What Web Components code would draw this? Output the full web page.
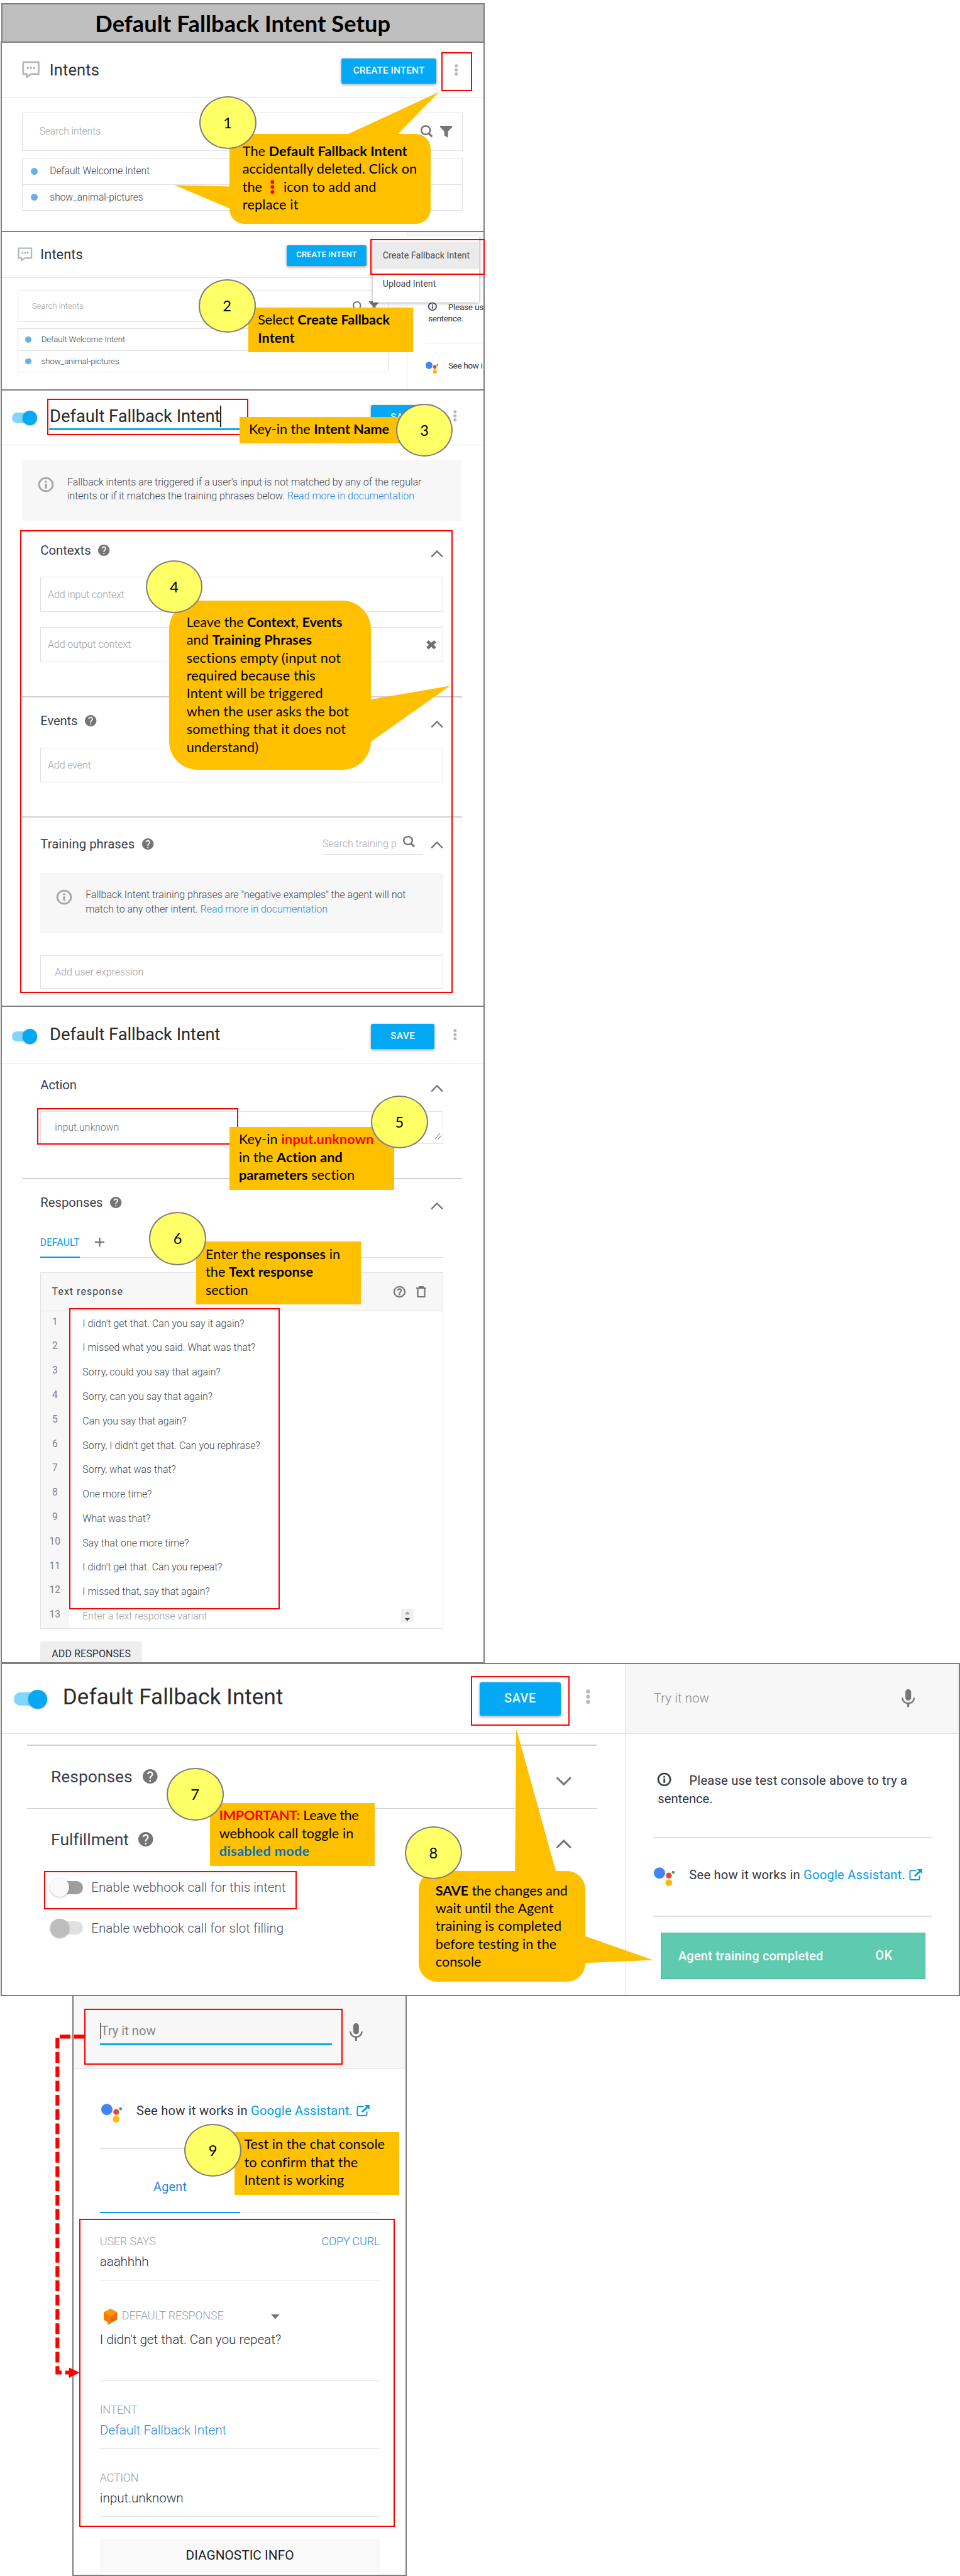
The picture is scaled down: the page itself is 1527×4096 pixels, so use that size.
<!DOCTYPE html>
<html lang="en">
<head>
<meta charset="utf-8">
<title>Default Fallback Intent Setup</title>
<style>
html{overflow:hidden;background:#fff}
body{margin:0;overflow:hidden}
</style>
</head>
<body>
<intent-guide></intent-guide>
<script>
const ICONS = {
  chat: ['0 0 30 29', '<path d="M2 2h26v20H15l-7 5v-5H2z" fill="none" stroke="#b4b8c4" stroke-width="3" stroke-linejoin="round"/><path d="M8 9.500h3.500v4H8zM13.300 9.500h3.500v4h-3.500zM18.600 9.500h3.500v4h-3.500z" fill="#b4b8c4"/>'],
  dots: ['0 0 6 20', '<circle cx="3" cy="3" r="2.700"/><circle cx="3" cy="10" r="2.700"/><circle cx="3" cy="17" r="2.700"/>'],
  search: ['0 0 20 21', '<circle cx="8.500" cy="8.500" r="7.200" fill="none" stroke="#757575" stroke-width="2.600"/><path d="M13.500 14l5.500 5.500" stroke="#757575" stroke-width="3.400"/>'],
  filter: ['0 0 20 20', '<path d="M0 0h20v2l-7 7.500V20l-6-4V9.500L0 2z" fill="#757575"/>'],
  help: ['2 2 20 20', '<path fill="#757575" d="M12 2C6.480 2 2 6.480 2 12s4.480 10 10 10 10-4.480 10-10S17.520 2 12 2zm1 17h-2v-2h2v2zm2.070-7.750l-.9.920C13.450 12.900 13 13.500 13 15h-2v-.5c0-1.100.450-2.100 1.170-2.830l1.240-1.260c.370-.360.590-.860.590-1.410 0-1.100-.9-2-2-2s-2 .9-2 2H8c0-2.210 1.790-4 4-4s4 1.790 4 4c0 .880-.360 1.680-.930 2.250z"/>'],
  helpo: ['2 2 20 20', '<path fill="#757575" stroke="#757575" stroke-width=".5" d="M11 18h2v-2h-2v2zm1-16C6.480 2 2 6.480 2 12s4.480 10 10 10 10-4.480 10-10S17.520 2 12 2zm0 18c-4.410 0-8-3.590-8-8s3.590-8 8-8 8 3.590 8 8-3.590 8-8 8zm0-14c-2.210 0-4 1.790-4 4h2c0-1.100.9-2 2-2s2 .9 2 2c0 2-3 1.750-3 5h2c0-2.250 3-2.500 3-5 0-2.210-1.790-4-4-4z"/>'],
  info: ['2 2 20 20', '<path fill="currentColor" stroke="currentColor" stroke-width=".5" d="M11 17h2v-6h-2v6zm1-15C6.480 2 2 6.480 2 12s4.480 10 10 10 10-4.480 10-10S17.520 2 12 2zm0 18c-4.410 0-8-3.590-8-8s3.590-8 8-8 8 3.590 8 8-3.590 8-8 8zM11 9h2V7h-2v2z"/>'],
  up: ['0 0 21 12', '<path d="M1.300 11L10.500 1.600 19.700 11" fill="none" stroke="#757575" stroke-width="2.500"/>'],
  down: ['0 0 21 12', '<path d="M1.300 1L10.500 10.400 19.700 1" fill="none" stroke="#757575" stroke-width="2.500"/>'],
  close: ['0 0 17 16', '<path d="M2 2l13 12M15 2L2 14" stroke="#6f6f6f" stroke-width="5.200"/>'],
  plus: ['0 0 16 15', '<path d="M8 0v15M0 7.500h16" stroke="#757575" stroke-width="2.400"/>'],
  trash: ['0 0 17 20', '<path d="M0 3.500h17M5.500 3V1.200h6V3M2.700 3.500v15h11.600v-15" fill="none" stroke="#757575" stroke-width="2.300"/>'],
  grip: ['0 0 10 10', '<path d="M0 10L8 0M5 10l5-6" stroke="#777" stroke-width="1.100"/>'],
  mic: ['5 2 14 19', '<path fill="#757575" d="M12 14c1.660 0 3-1.340 3-3V5c0-1.660-1.340-3-3-3S9 3.340 9 5v6c0 1.660 1.340 3 3 3zm5.300-3c0 3-2.540 5.100-5.300 5.100S6.700 14 6.700 11H5c0 3.410 2.720 6.230 6 6.720V21h2v-3.280c3.280-.480 6-3.300 6-6.720h-1.700z"/>'],
  assistant: ['0 0 35 32', '<circle cx="9.500" cy="9.700" r="9.500" fill="#4285f4"/><circle cx="25.200" cy="14" r="4.900" fill="#ea4335"/><circle cx="32.500" cy="8.700" r="2.500" fill="#34a853"/><circle cx="25.200" cy="26" r="5.700" fill="#fbbc05"/>'],
  ext: ['0 0 22 19', '<path d="M12 2.500H4Q1.500 2.500 1.500 5v10.500Q1.500 18 4 18h11q2.500 0 2.500-2.500V11" fill="none" stroke="#039be5" stroke-width="2"/><path d="M13 0h9v8l-3-2.600-8.500 7.400-2.300-2 8.500-7.600z" fill="#039be5"/>'],
  cube: ['0 0 22 27', '<path d="M11 0l11 6v12.500L6.500 27v-4.500L0 18.500V6z" fill="#ef6c00"/><path d="M11 0l11 6-11 6.500L0 6z" fill="#ff9800"/><path d="M0 6l11 6.500v12L6.500 27v-4.500L0 18.500z" fill="#f57c00"/>'],
  caret: ['0 0 14 8', '<path d="M0 0h14L7 8z" fill="#757575"/>'],
  spin: ['0 0 21 24', '<path d="M0 0h21v24H0z" fill="#efefef"/><path d="M6 9.500h9L10.500 4.500z" fill="#9c9c9c"/><path d="M6 15.500h9l-4.500 5z" fill="#444"/>']
};

class AppIcon extends HTMLElement {
  connectedCallback() {
    if (this.shadowRoot) return;
    const [box, art] = ICONS[this.getAttribute('name')];
    const w = this.getAttribute('w'), h = this.getAttribute('h');
    this.attachShadow({mode: 'open'}).innerHTML =
      `<style>:host{display:block;flex:none;width:${w}px;height:${h}px;fill:#b4b8c4}svg{display:block;width:100%;height:100%;overflow:visible}</style>
       <svg viewBox="${box}" preserveAspectRatio="none">${art}</svg>`;
  }
}

/* One line of text, tracked so that it fills the given width. */
class UiText extends HTMLElement {
  connectedCallback() {
    if (this.shadowRoot) return;
    const w = +this.getAttribute('w');
    const s = this.getAttribute('s');
    this.attachShadow({mode: 'open'}).innerHTML =
      `<style>:host{display:block;flex:none;width:${w}px;white-space:nowrap;${s ? `font-size:${s}px` : ''}}
       </style><span><slot></slot></span>`;
    const span = this.shadowRoot.querySelector('span');
    const host = this.getBoundingClientRect().width;
    if (!host) return;
    const natural = w * span.getBoundingClientRect().width / host;
    const n = this.textContent.length;
    span.style.letterSpacing = ((w - natural) / n).toFixed(4) + 'px';
  }
}

class StepPanel extends HTMLElement {
  connectedCallback() {
    if (this.shadowRoot) return;
    this.attachShadow({mode: 'open'}).innerHTML =
      `<style>:host{display:flex;position:relative;box-sizing:border-box;width:${this.getAttribute('w') || 815}px;height:${this.getAttribute('h')}px;flex:none}
       :host::after{content:"";position:absolute;inset:-1px 0 -1px 1px;border:2.200px solid #7f7f7f;pointer-events:none}
       div{flex:1;min-width:0;display:flex;overflow:hidden}::slotted(*){flex:none}</style><div><slot></slot></div>`;
  }
}

class UiButton extends HTMLElement {
  connectedCallback() {
    if (this.shadowRoot) return;
    const a = n => this.getAttribute(n);
    this.attachShadow({mode: 'open'}).innerHTML =
      `<style>:host{display:flex;flex:none;align-items:center;justify-content:center;width:${a('w')}px;height:${a('h')}px;background:#03a9f4;color:#fff;font-weight:500;border-radius:3px;box-shadow:0 2px 5px rgba(0,0,0,.35)}ui-text{margin-top:-3px}</style>
       <ui-text w="${a('tw')}" s="${a('s')}">${a('label')}</ui-text>`;
  }
}

class ToggleSwitch extends HTMLElement {
  connectedCallback() {
    if (this.shadowRoot) return;
    const a = n => this.getAttribute(n);
    const kinds = {on: ['#81d4fa', '#03a9f4', 'flex-end'], off: ['#9e9e9e', '#fafafa', 'flex-start'], disabled: ['#e0e0e0', '#bdbdbd', 'flex-start']};
    const [track, thumb, side] = kinds[a('state')];
    this.attachShadow({mode: 'open'}).innerHTML =
      `<style>:host{display:grid;flex:none;width:${a('w')}px;height:${a('t')}px;align-items:center}
       i,b{grid-area:1/1}i{height:70%;width:90%;border-radius:20px;background:${track};justify-self:${side === 'flex-end' ? 'start' : 'end'}}
       b{width:${a('t')}px;height:${a('t')}px;border-radius:50%;background:${thumb};justify-self:${side};box-shadow:0 1px 3px rgba(0,0,0,.3)}</style><i></i><b></b>`;
  }
}

/* Bordered box for inputs */
class FieldBox extends HTMLElement {
  connectedCallback() {
    if (this.shadowRoot) return;
    const a = n => this.getAttribute(n);
    this.attachShadow({mode: 'open'}).innerHTML =
      `<style>:host{display:flex;align-items:center;box-sizing:border-box;border:1.500px solid #e0e0e0;width:${a('w')}px;height:${a('h')}px;font-weight:300;color:#a0a0a4;font-size:17px}</style><slot></slot>`;
  }
}

class SectionHead extends HTMLElement {
  connectedCallback() {
    if (this.shadowRoot) return;
    const a = n => this.getAttribute(n);
    const big = this.hasAttribute('big');
    this.attachShadow({mode: 'open'}).innerHTML =
      `<style>:host{display:flex;align-items:center;box-sizing:border-box;height:${big ? 52 : 41}px;padding:0 ${big ? '88.600px 0 85.800px' : '69px 0 68px'};color:#3b3f4a;font-size:${big ? 28 : 21.500}px}
       .help{margin-left:${big ? 17 : 12.500}px}.chev{margin:${a('drop') || 12}px 0 0 13px}.grow{flex:1;display:flex;justify-content:flex-end}</style>
       <ui-text w="${a('w')}">${a('label')}</ui-text>
       ${this.hasAttribute('nohelp') ? '' : `<app-icon class="help" name="help" w="${big ? 25 : 19.500}" h="${big ? 24.500 : 19}"></app-icon>`}
       <span class="grow"><slot></slot></span>
       <app-icon class="chev" name="${a('chev') || 'up'}" w="${big ? 27 : 21.400}" h="${big ? 15 : 12}"></app-icon>`;
  }
}

class InfoBanner extends HTMLElement {
  connectedCallback() {
    if (this.shadowRoot) return;
    this.attachShadow({mode: 'open'}).innerHTML =
      `<style>:host{display:flex;box-sizing:border-box;height:102.400px;width:${this.getAttribute('w')}px;background:#f7f7f7;padding:26px 0 0 27.500px;gap:23.500px;font-weight:300;font-size:17px;line-height:24px;color:#3f434d}
       app-icon{color:#a3a5aa;margin-top:3px}</style>
       <app-icon name="info" w="25.500" h="24.500"></app-icon><div><slot></slot></div>`;
  }
}

class ResponseTable extends HTMLElement {
  connectedCallback() {
    if (this.shadowRoot) return;
    const rows = [["I didn't get that. Can you say it again?", 272], ["I missed what you said. What was that?", 290.8], ["Sorry, could you say that again?", 232], ["Sorry, can you say that again?", 218.6], ["Can you say that again?", 175], ["Sorry, I didn't get that. Can you rephrase?", 298.6], ["Sorry, what was that?", 157], ["One more time?", 116.6], ["What was that?", 114], ["Say that one more time?", 179], ["I didn't get that. Can you repeat?", 235], ["I missed that, say that again?", 214], ["Enter a text response variant", 209.7]];
    this.attachShadow({mode: 'open'}).innerHTML =
      `<style>:host{display:flex;flex-direction:column;box-sizing:border-box;width:678.500px;height:600px;border:1.500px solid #e3e3e3}
       header{display:flex;align-items:center;height:63px;background:#f7f7f7;border-bottom:1.500px solid #e3e3e3;padding:0 28px 0 19px;color:#3b3f4a}
       header ui-text{margin-right:auto}header app-icon{margin-left:18px}
       .r{display:flex;align-items:center;height:41.030px;font-weight:300;font-size:16.800px;color:#3c3f48}
       .n{width:48px;height:100%;display:flex;justify-content:center;background:#f7f7f7;font-weight:400;font-size:16.500px;line-height:37.500px;color:#808289;margin-right:22.600px;flex:none}
       .last{color:#9b9b9b}.last app-icon{margin-left:auto;margin-right:49px}</style>
       <header><ui-text w="120" s="17">Text response</ui-text><app-icon name="helpo" w="20" h="19"></app-icon><app-icon name="trash" w="17" h="19.500"></app-icon></header>
       ${rows.map(([t, w], i) => `<div class="r${i === 12 ? ' last' : ''}"><span class="n">${i + 1}</span><ui-text w="${w}">${t}</ui-text>${i === 12 ? '<app-icon name="spin" w="21" h="24"></app-icon>' : ''}</div>`).join('')}`;
  }
}

/* Annotations that lie over the panels */
class RedFrame extends HTMLElement {
  connectedCallback() {
    if (this.shadowRoot) return;
    const [x, y, x2, y2] = this.getAttribute('box').split(' ').map(Number);
    this.attachShadow({mode: 'open'}).innerHTML =
      `<style>:host{display:block;position:absolute;box-sizing:border-box;left:${x}px;top:${y}px;width:${x2 - x}px;height:${y2 - y}px;border:2.200px solid #f00}</style>`;
  }
}
class StepBadge extends HTMLElement {
  connectedCallback() {
    if (this.shadowRoot) return;
    const [x, y] = this.getAttribute('at').split(' ').map(Number);
    this.attachShadow({mode: 'open'}).innerHTML =
      `<style>:host{display:flex;align-items:center;justify-content:center;position:absolute;box-sizing:border-box;left:${x}px;top:${y}px;width:96px;height:89px;border:2.200px solid #7f7f7f;border-radius:50%;background:#ff6;font:25px Lato,sans-serif;color:#000}</style><slot></slot>`;
  }
}
class NoteCallout extends HTMLElement {
  connectedCallback() {
    if (this.shadowRoot) return;
    const [x, y, x2, y2] = this.getAttribute('box').split(' ').map(Number);
    const tails = (this.getAttribute('tails') || '').split(';').filter(Boolean)
      .map(t => `<polygon points="${t.trim().split(' ').map(p => { const [a, b] = p.split(','); return (a - x) + ',' + (b - y); }).join(' ')}"/>`).join('');
    this.attachShadow({mode: 'open'}).innerHTML =
      `<style>:host{display:block;position:absolute;box-sizing:border-box;left:${x}px;top:${y}px;width:${x2 - x}px;height:${y2 - y}px;background:#ffc000;border-radius:${this.getAttribute('r') || 0}px;padding:${this.getAttribute('pad') || '6px 0 0 15.800px'};font:22.900px/30px Lato,sans-serif;color:#000}
       svg{position:absolute;left:0;top:0;width:1px;height:1px;overflow:visible;fill:#ffc000}
       section{position:relative}</style><svg>${tails}</svg><section><slot></slot></section>`;
  }
}

class IntentGuide extends HTMLElement {
  connectedCallback() {
    if (this.shadowRoot) return;
    this.attachShadow({mode: 'open'}).innerHTML = `
<style>
:host{display:block;position:relative;width:1615px;height:4332px;zoom:.9455;font-family:Roboto,"Liberation Sans",sans-serif;font-size:17px;color:#2f333d;background:#fff;overflow:hidden}
main{display:flex;flex-direction:column;padding-top:5px}
.title{box-sizing:border-box;width:813px;height:66px;margin-left:2px;border:2.200px solid #7f7f7f;border-bottom:0;background:#bfbfbf;display:flex;align-items:center;justify-content:center;font:700 38.300px Lato,sans-serif;color:#000}
.col{display:flex;flex-direction:column;flex:none}
.col>*{flex:none}
.row{display:flex;align-items:center;box-sizing:border-box}
.head{border-bottom:1.500px solid #e3e3e3}
.auto{margin-left:auto}
.light{font-weight:300}
a{color:#1e88e5}
hr{margin:0;border:0;height:1.600px;background:#d2cecd}
hr.soft{background:#e2e2e2}
.dot{width:11.600px;height:11.600px;border-radius:50%;background:#64b1ea;flex:none}
.list{border:1.500px solid #e0e0e0;box-sizing:border-box;font-weight:300;color:#3a3e48}
.list .row+.row{border-top:1.500px solid #e0e0e0}
.side{border-left:1.500px solid #e3e3e3;box-sizing:border-box}
.grey{background:#f7f7f7}
.name{display:flex;align-items:center;box-sizing:border-box;width:495.500px;padding-left:.7px;color:#2a2a2a}
.caret{width:1.600px;background:#222;flex:none}
.menu{position:absolute;left:627.600px;top:398px;width:178.400px;height:111px;box-sizing:border-box;padding-top:7.700px;background:#fff;box-shadow:0 2px 5px rgba(0,0,0,.35);color:#4a4a4a;font-size:15px}
.menu div{display:flex;align-items:center;height:47.300px;padding-left:16.200px}
.menu div:first-child{background:#ebebeb}
.label{color:#9a9ea8;font-weight:300;font-size:19px;height:30px;line-height:30px;display:flex;align-items:center;justify-content:space-between}
.value{font-weight:300;font-size:22px;height:40px;line-height:40px;color:#2c303a}
.over{position:absolute;inset:0}
.over svg{position:absolute;left:0;top:0;width:1615px;height:4332px}
.red{color:#f00}.blue{color:#0070c0}
</style>
<main>
<div class="title"><ui-text w="497">Default Fallback Intent Setup</ui-text></div>

<step-panel h="318"><div class="col" style="width:815px">
  <div class="row head" style="height:93.500px;padding:0 44px 0 36.600px">
    <app-icon name="chat" w="30" h="29"></app-icon><ui-text w="84" s="27" style="margin-left:16.600px">Intents</ui-text>
    <ui-button class="auto" style="margin-top:5px" w="160" h="43" tw="120" s="16.300" label="CREATE INTENT"></ui-button>
    <app-icon name="dots" w="6" h="19.500" style="margin-left:31px"></app-icon>
  </div>
  <field-box w="741.300" h="64" style="margin:25px 0 0 37.200px"><ui-text w="103" s="16.500" style="margin-left:28px">Search intents</ui-text>
    <app-icon class="auto" name="search" w="20.500" h="21"></app-icon><app-icon name="filter" w="20.500" h="20" style="margin:0 17px 0 12px"></app-icon></field-box>
  <div class="list" style="width:741.300px;margin:12.400px 0 0 37.200px">
    <div class="row" style="height:42.500px;padding-left:14px;gap:20px"><i class="dot"></i><ui-text w="168" s="16.500">Default Welcome Intent</ui-text></div>
    <div class="row" style="height:43.500px;padding-left:14px;gap:20px"><i class="dot"></i><ui-text w="157" s="16.500">show_animal-pictures</ui-text></div>
  </div>
</div></step-panel>

<step-panel h="267"><div class="col" style="width:684px">
  <div class="row head" style="height:78.500px;padding:0 67.400px 0 29.300px">
    <app-icon name="chat" w="25" h="24"></app-icon><ui-text w="71.500" s="23" style="margin-left:13.700px">Intents</ui-text>
    <ui-button class="auto" style="margin-top:4px" w="134.600" h="35" tw="102" s="14" label="CREATE INTENT"></ui-button>
  </div>
  <field-box w="624" h="53" style="margin:21px 0 0 29.500px"><ui-text w="87" s="14" style="margin-left:23px">Search intents</ui-text>
    <app-icon class="auto" name="search" w="17" h="17.500"></app-icon><app-icon name="filter" w="17" h="17" style="margin:0 15px 0 10px"></app-icon></field-box>
  <div class="list" style="width:624px;margin:10.700px 0 0 29.500px">
    <div class="row" style="height:35.500px;padding-left:12px;gap:17px"><i class="dot" style="width:10px;height:10px"></i><ui-text w="141" s="14">Default Welcome Intent</ui-text></div>
    <div class="row" style="height:36.500px;padding-left:12px;gap:17px"><i class="dot" style="width:10px;height:10px"></i><ui-text w="131" s="14">show_animal-pictures</ui-text></div>
  </div>
</div><div class="col side" style="width:131px">
  <div class="row head grey" style="height:78.500px"></div>
  <div class="col" style="margin:38.700px 0 0 35.200px;font-size:14.500px;line-height:19.600px">
    <div class="row"><app-icon name="info" w="14.500" h="13.500"></app-icon><ui-text w="59.500" style="margin-left:19px">Please us</ui-text></div>
    <ui-text w="58.600">sentence.</ui-text>
  </div>
  <hr class="soft" style="margin:31px 0 0 30px">
  <div class="row" style="height:30px;margin:22px 0 0 31px"><app-icon name="assistant" w="21.500" h="20.500" style="margin-top:6px"></app-icon><ui-text w="57.500" s="14.500" style="margin-left:16.500px">See how i</ui-text></div>
</div></step-panel>

<step-panel h="1036"><div class="col" style="width:815px">
  <div class="row head" style="height:92.700px;padding:0 46.400px 0 20px">
    <toggle-switch state="on" w="42.800" t="24.800" style="margin-top:2px"></toggle-switch>
    <div class="name" style="margin-left:20.200px;height:43.400px;border-bottom:3.200px solid #03a9f4"><ui-text w="287" s="29">Default Fallback Intent</ui-text><i class="caret" style="height:35px"></i></div>
    <ui-button style="margin:2px 0 0 46px" w="106.500" h="43" tw="41.500" s="16" label="SAVE"></ui-button>
    <app-icon class="auto" name="dots" w="6" h="19.500" style="margin-top:-4px"></app-icon>
  </div>
  <info-banner w="740" style="margin:24.600px 0 0 36.600px"><ui-text w="596">Fallback intents are triggered if a user's input is not matched by any of the regular</ui-text><ui-text w="584">intents or if it matches the training phrases below. <a>Read more in documentation</a></ui-text></info-banner>
  <section-head style="margin-top:29.300px" label="Contexts" w="85"></section-head>
  <field-box w="678.500" h="59.400" style="margin:24.300px 0 0 67.300px"><ui-text w="129" style="margin-left:12px">Add input context</ui-text></field-box>
  <field-box w="678.500" h="59.700" style="margin:24.600px 0 0 67.300px"><ui-text w="140" style="margin-left:12px">Add output context</ui-text><app-icon class="auto" name="close" w="17" h="15.500" style="margin-right:11px"></app-icon></field-box>
  <hr style="margin:57px 38px 0 37px">
  <section-head style="margin-top:19.400px" label="Events" w="62.500"></section-head>
  <field-box w="678.500" h="58.800" style="margin:24.600px 0 0 67.300px"><ui-text w="72.700" style="margin-left:12px">Add event</ui-text></field-box>
  <hr style="margin:57px 38px 0 37px">
  <section-head style="margin-top:24.500px" drop="3" label="Training phrases" w="158.500"><div class="row light" style="width:169px;height:35.500px;border-bottom:1.500px solid #e0e0e0;color:#a8a8a8"><ui-text w="124.500" s="17">Search training p</ui-text><app-icon name="search" w="20" h="19.500" style="margin:-8px 0 0 11px"></app-icon></div></section-head>
  <info-banner w="678.500" style="margin:27.300px 0 0 67.500px"><ui-text w="538.700">Fallback Intent training phrases are "negative examples" the agent will not</ui-text><ui-text w="407">match to any other intent. <a>Read more in documentation</a></ui-text></info-banner>
  <field-box w="678.500" h="55.700" style="margin:36.600px 0 0 67.300px"><ui-text w="149" style="margin-left:24px">Add user expression</ui-text></field-box>
</div></step-panel>

<step-panel h="1105"><div class="col" style="width:815px">
  <div class="row head" style="height:97px;padding:0 46.400px 0 20px">
    <toggle-switch state="on" w="42.800" t="24.800" style="margin-top:6px"></toggle-switch>
    <div class="name" style="margin-left:20.200px;height:45.500px;border-bottom:1.500px solid #ebebeb"><ui-text w="287" s="29">Default Fallback Intent</ui-text></div>
    <ui-button style="margin:6px 0 0 46px" w="106.500" h="43" tw="41.500" s="16" label="SAVE"></ui-button>
    <app-icon class="auto" name="dots" w="6" h="19.500"></app-icon>
  </div>
  <section-head style="margin-top:15px" label="Action" w="61" nohelp></section-head>
  <field-box w="678.500" h="54.700" style="margin:24.300px 0 0 67.300px;color:#6a6c72"><ui-text w="108" style="margin-left:24px" s="16.500">input.unknown</ui-text><app-icon name="grip" w="10" h="10" style="margin:28px 3px 0 auto"></app-icon></field-box>
  <hr style="margin:56.700px 38px 0 37px;height:2.200px">
  <section-head style="margin-top:18.800px" label="Responses" w="105"></section-head>
  <div class="row" style="height:49px;margin:23.900px 69px 0 67.500px;border-bottom:1.500px solid #e0e0e0;align-items:flex-start"><div style="flex:none;line-height:48px;border-bottom:2.200px solid #039be5;box-sizing:border-box;height:49px;color:#039be5"><ui-text w="66.500" s="16.500">DEFAULT</ui-text></div><app-icon name="plus" w="16" h="15" style="margin:15px 0 0 25.500px"></app-icon></div>
  <response-table style="margin:24.300px 0 0 67.300px"></response-table>
  <div class="row" style="margin:20.200px 0 0 67.500px;width:172px;height:42px;background:#eee;border-radius:3px;justify-content:center"><ui-text w="133" s="17">ADD RESPONSES</ui-text></div>
</div></step-panel>

<step-panel h="559" w="1614.500"><div class="col" style="width:1051px">
  <div class="row head" style="height:119.500px;padding:0 58.400px 0 23.500px">
    <toggle-switch state="on" w="55.500" t="31.500" style="margin-top:3px"></toggle-switch>
    <ui-text w="371" s="37" style="margin:-5px 0 0 26.500px;color:#2a2a2a">Default Fallback Intent</ui-text>
    <ui-button class="auto" style="margin-top:2px" w="137" h="56.400" tw="53.500" s="20.500" label="SAVE"></ui-button>
    <app-icon name="dots" w="7" h="25" style="margin:-6px 0 0 41.800px"></app-icon>
  </div>
  <hr style="margin:17.800px 47px 0 46px">
  <section-head big drop="16" chev="down" style="margin-top:25.200px" label="Responses" w="137"></section-head>
  <hr style="margin:27.400px 47px 0 46px">
  <section-head big drop="16" style="margin-top:25.500px" label="Fulfillment" w="130"></section-head>
  <div class="row light" style="height:40px;margin:34.800px 0 0 84.700px;gap:14px;color:#454b5a"><toggle-switch state="off" w="55" t="31.500"></toggle-switch><ui-text w="327" s="21.700">Enable webhook call for this intent</ui-text></div>
  <div class="row light" style="height:40px;margin:28.300px 0 0 84.700px;gap:14px;color:#454b5a"><toggle-switch state="disabled" w="55" t="31.500"></toggle-switch><ui-text w="323" s="21.700">Enable webhook call for slot filling</ui-text></div>
</div><div class="col side" style="width:563px">
  <div class="row head grey light" style="height:119.500px;padding:0 74.400px 0 47.500px;color:#85868a"><ui-text w="93.600" s="21.500">Try it now</ui-text><app-icon class="auto" name="mic" w="22.600" h="30"></app-icon></div>
  <div class="col" style="margin:63.200px 0 0 54.500px;font-size:21.300px;line-height:30.800px">
    <div class="row"><app-icon name="info" w="22.500" h="22" style="margin-top:-5px"></app-icon><ui-text w="367" style="margin-left:30.500px">Please use test console above to try a</ui-text></div>
    <ui-text w="92.500">sentence.</ui-text>
  </div>
  <hr class="soft" style="margin:48.200px 45.300px 0 46.500px">
  <div class="row" style="height:40px;margin:41.800px 0 0 47.500px"><app-icon name="assistant" w="35" h="32" style="margin-top:7px"></app-icon><ui-text w="363.500" s="21.300" style="margin-left:25px">See how it works in <a style="color:#039be5">Google Assistant.</a></ui-text><app-icon name="ext" w="22" h="19" style="margin-left:6px"></app-icon></div>
  <hr class="soft" style="margin:49px 45.300px 0 46.500px">
  <div class="row" style="box-sizing:border-box;margin:26.600px 0 0 60px;width:445px;height:78px;background:#5ecab0;border:1.500px solid #3fbb8f;color:#fff;padding-left:28px;font-weight:500"><ui-text w="244" s="21.200">Agent training completed</ui-text><ui-text w="29.500" s="21" style="margin-left:87.500px">OK</ui-text></div>
</div></step-panel>

<step-panel h="975" w="563.500" style="margin-left:121px"><div class="col" style="width:563.500px">
  <div class="row head grey" style="height:123.300px;padding-left:47px">
    <div class="row" style="width:390px;height:45.300px;border-bottom:3.300px solid #03a9f4;color:#85868a"><i class="caret" style="height:27px"></i><ui-text w="92.500" s="21.500">Try it now</ui-text></div>
    <app-icon name="mic" w="22" h="29.500" style="margin-left:29.700px"></app-icon>
  </div>
  <div class="row" style="height:40px;margin:50.500px 0 0 49px"><app-icon name="assistant" w="35" h="32" style="margin-top:9px"></app-icon><ui-text w="364" s="21.300" style="margin-left:24.500px">See how it works in <a style="color:#039be5">Google Assistant.</a></ui-text><app-icon name="ext" w="22" h="19" style="margin-left:6px"></app-icon></div>
  <div class="col" style="width:471px;margin-left:47px">
    <hr class="soft" style="margin-top:42.200px">
    <div class="row" style="margin-top:23px;height:85px;border-bottom:1.500px solid #e0e0e0;align-items:stretch"><div class="row" style="width:236.500px;justify-content:center;border-bottom:2.200px solid #039be5;margin-bottom:-1px;color:#1e88e5"><ui-text w="56.500" s="21">Agent</ui-text></div></div>
    <div class="label" style="margin-top:33px"><ui-text w="94">USER SAYS</ui-text><ui-text w="98"><a>COPY CURL</a></ui-text></div>
    <div class="value"><ui-text w="82">aaahhhh</ui-text></div>
    <hr class="soft" style="margin-top:9.500px">
    <div class="label" style="margin-top:44.200px;justify-content:flex-start"><app-icon name="cube" w="22.600" h="27" style="margin:2px 8.400px 0 6px"></app-icon><ui-text w="171">DEFAULT RESPONSE</ui-text><app-icon name="caret" w="14.500" h="8" style="margin-left:79.400px;margin-top:2px"></app-icon></div>
    <div class="value" style="margin-top:6.200px"><ui-text w="305">I didn't get that. Can you repeat?</ui-text></div>
    <hr class="soft" style="margin-top:47px">
    <div class="label" style="margin-top:33.200px"><ui-text w="63">INTENT</ui-text></div>
    <div class="value"><ui-text w="213"><a>Default Fallback Intent</a></ui-text></div>
    <hr class="soft" style="margin-top:9.500px">
    <div class="label" style="margin-top:33.200px"><ui-text w="65">ACTION</ui-text></div>
    <div class="value"><ui-text w="140.500">input.unknown</ui-text></div>
    <hr class="soft" style="margin-top:9.500px">
    <div class="row" style="margin-top:37px;height:56px;background:#f9f9f9;border-bottom:1.500px solid #eee;justify-content:center;color:#1d1f24"><ui-text w="182" s="22">DIAGNOSTIC INFO</ui-text></div>
  </div>
</div></step-panel>
</main>

<div class="menu"><div><ui-text w="146.500">Create Fallback Intent</ui-text></div><div><ui-text w="89.500">Upload Intent</ui-text></div></div>

<div class="over">
<svg viewBox="0 0 1615 4332"><path d="M142.500 3425H96.600V3990H118" fill="none" stroke="#f00" stroke-width="6.500" stroke-dasharray="18 6"/><path d="M116 3981.500L134 3990 116 3999z" fill="#f00"/></svg>
<red-frame box="742.500 88 794 153"></red-frame>
<red-frame box="623 402 815 462"></red-frame>
<red-frame box="79 671 418 732"></red-frame>
<red-frame box="34 892 762 1670"></red-frame>
<red-frame box="62.500 1864 401 1925"></red-frame>
<red-frame box="116 2200 470.500 2707"></red-frame>
<red-frame box="792 2819 958.500 2902"></red-frame>
<red-frame box="74 3146 499 3211"></red-frame>
<red-frame box="142 3378 576 3472"></red-frame>
<red-frame box="133 3731 664 4250"></red-frame>

<note-callout box="386 225 725 376" r="25" pad="14px 0 0 22px" tails="583.7,226 738.5,154.5 668.5,226;293.4,311 387,313.3 387,350.7">
  <ui-text w="277">The <b>Default Fallback Intent</b></ui-text><ui-text w="293.500">accidentally deleted. Click on</ui-text>
  <div style="display:flex;align-items:center"><ui-text w="33">the</ui-text><app-icon name="dots" w="7" h="24" style="fill:#f00;margin:0 15px 0 14px"></app-icon><ui-text w="156">icon to add and</ui-text></div>
  <ui-text w="94">replace it</ui-text></note-callout>
<note-callout box="418 517 695 592"><ui-text w="222">Select <b>Create Fallback</b></ui-text><ui-text w="62"><b>Intent</b></ui-text></note-callout>
<note-callout box="403 701 700 746"><ui-text w="236">Key-in the <b>Intent Name</b></ui-text></note-callout>
<note-callout box="284 1010 624 1295" r="48" pad="21.200px 0 0 29.800px" tails="623,1176.2 756.8,1153.3 623,1247.6">
  <ui-text w="262">Leave the <b>Context</b>, <b>Events</b></ui-text><ui-text w="211">and <b>Training Phrases</b></ui-text><ui-text w="260">sections empty (input not</ui-text><ui-text w="217">required because this</ui-text><ui-text w="229.600">Intent will be triggered</ui-text><ui-text w="273">when the user asks the bot</ui-text><ui-text w="268">something that it does not</ui-text><ui-text w="121">understand)</ui-text></note-callout>
<note-callout box="386 1895 663 2001"><ui-text w="227">Key-in <b class="red">input.unknown</b></ui-text><ui-text w="175">in the <b>Action and</b></ui-text><ui-text w="195.300"><b>parameters</b> section</ui-text></note-callout>
<note-callout box="330 2088 607 2194"><ui-text w="226.500">Enter the <b>responses</b> in</ui-text><ui-text w="181">the <b>Text response</b></ui-text><ui-text w="71.700">section</ui-text></note-callout>
<note-callout box="353 3032 630 3138"><ui-text w="234.500"><b class="red">IMPORTANT:</b> Leave the</ui-text><ui-text w="226">webhook call toggle in</ui-text><ui-text w="152"><b class="blue">disabled mode</b></ui-text></note-callout>
<note-callout box="704 3147 985 3333" r="31" pad="17.200px 0 0 28.700px" tails="866,3148 868,2907.4 935,3148;984,3256.4 1098.3,3296.7 984,3301.8">
  <ui-text w="222"><b>SAVE</b> the changes and</ui-text><ui-text w="199">wait until the Agent</ui-text><ui-text w="212">training is completed</ui-text><ui-text w="204">before testing in the</ui-text><ui-text w="77">console</ui-text></note-callout>
<note-callout box="395 3585 672 3691"><ui-text w="236.500">Test in the chat console</ui-text><ui-text w="191">to confirm that the</ui-text><ui-text w="168">Intent is working</ui-text></note-callout>

<step-badge at="335 162">1</step-badge>
<step-badge at="334 470">2</step-badge>
<step-badge at="666 679">3</step-badge>
<step-badge at="245 942">4</step-badge>
<step-badge at="624 1842">5</step-badge>
<step-badge at="251 2038.500">6</step-badge>
<step-badge at="280 2973">7</step-badge>
<step-badge at="681 3071">8</step-badge>
<step-badge at="310 3571.500">9</step-badge>
</div>`;
  }
}

customElements.define('intent-guide', IntentGuide);
customElements.define('step-panel', StepPanel);
customElements.define('ui-button', UiButton);
customElements.define('toggle-switch', ToggleSwitch);
customElements.define('field-box', FieldBox);
customElements.define('section-head', SectionHead);
customElements.define('info-banner', InfoBanner);
customElements.define('response-table', ResponseTable);
customElements.define('red-frame', RedFrame);
customElements.define('step-badge', StepBadge);
customElements.define('note-callout', NoteCallout);
customElements.define('app-icon', AppIcon);
customElements.define('ui-text', UiText);
</script>
</body>
</html>
